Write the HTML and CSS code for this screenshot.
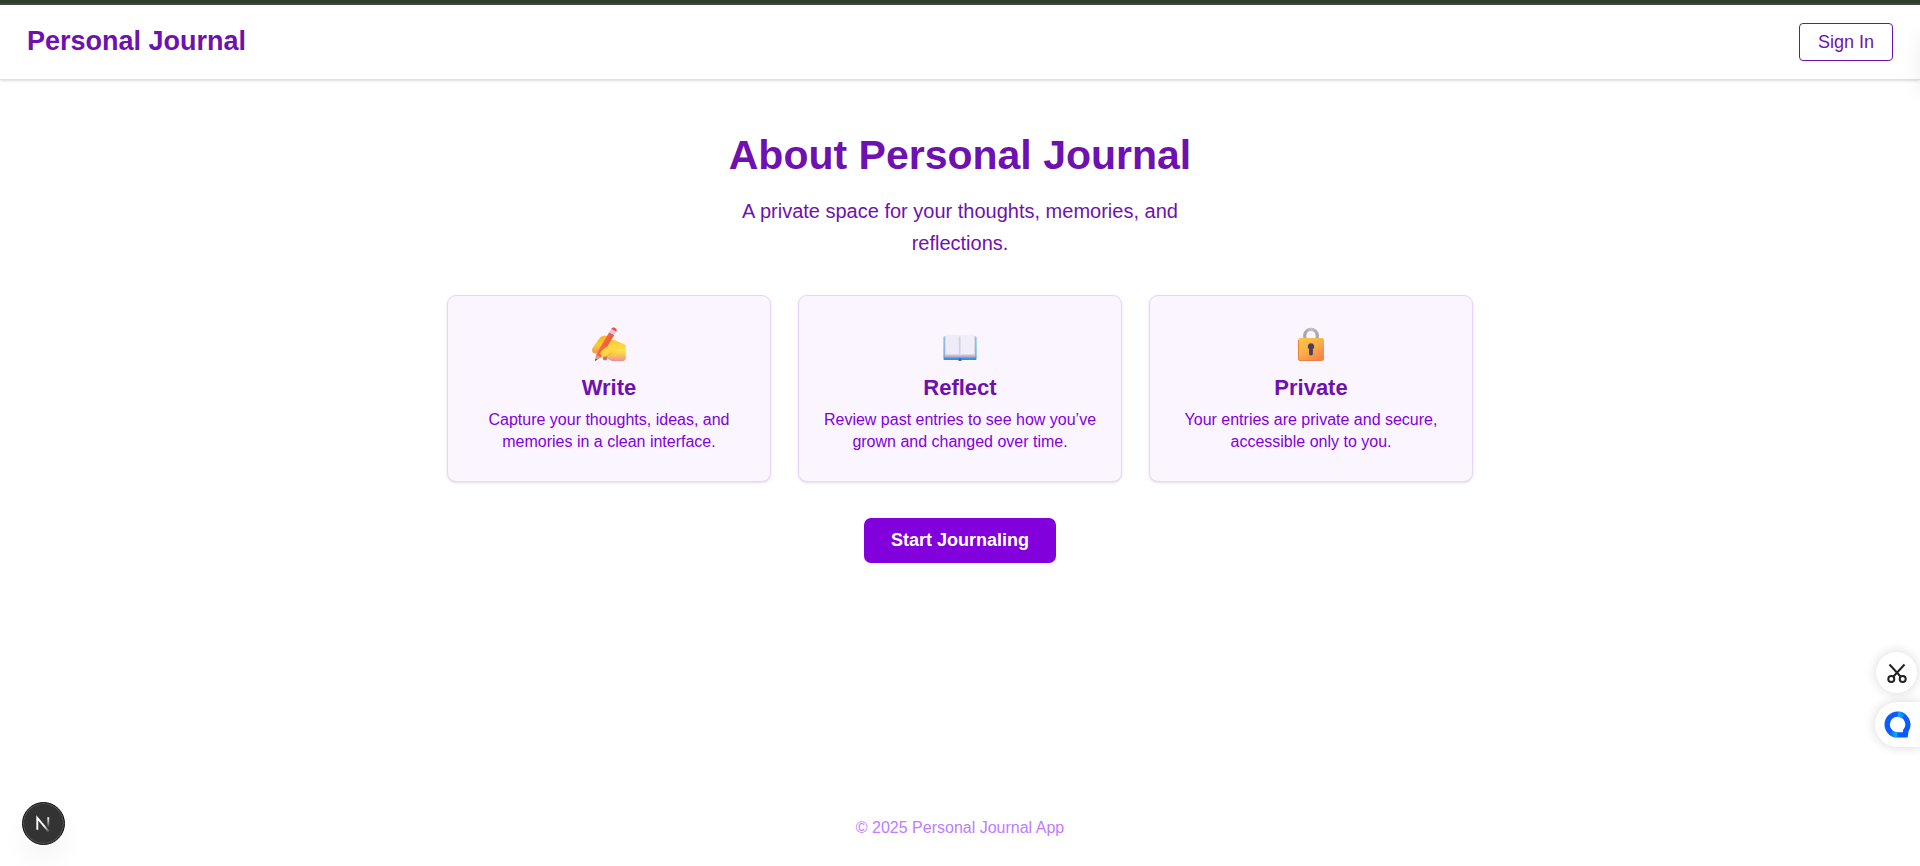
FILE: index.html
```html
<!DOCTYPE html>
<html lang="en">
<head>
<meta charset="utf-8">
<meta name="viewport" content="width=device-width, initial-scale=1">
<title>Personal Journal</title>
<link rel="stylesheet" href="styles.css">
</head>
<body>
<div class="top-strip"></div>
<header class="site-header">
  <div class="brand">Personal Journal</div>
  <button class="sign-in" type="button">Sign In</button>
</header>
<main class="main">
  <h1 class="title">About Personal Journal</h1>
  <p class="lead">A private space for your thoughts, memories, and reflections.</p>
  <section class="cards">
    <article class="card">
      <svg class="card-icon" viewBox="0 0 36 36" aria-hidden="true">
        <defs>
          <linearGradient id="hand" x1="0" y1="0" x2="0" y2="1"><stop offset="0" stop-color="#f6b62c"/><stop offset=".5" stop-color="#fcc934"/><stop offset="1" stop-color="#e99a55"/></linearGradient>
          <linearGradient id="fist" x1="0" y1="0" x2="0" y2="1"><stop offset="0" stop-color="#fcc72f"/><stop offset=".5" stop-color="#ffe04c"/><stop offset=".75" stop-color="#f7c152"/><stop offset="1" stop-color="#e48db0"/></linearGradient>
          <linearGradient id="pencil" x1="0" y1="0" x2="1" y2=".6"><stop offset="0" stop-color="#ff7a4a"/><stop offset=".6" stop-color="#f95f3a"/><stop offset="1" stop-color="#e44c30"/></linearGradient>
        </defs>
        <path d="M17 10.300c-3-.8-6.500-.6-8.300 1.700L1.800 21.500C.4 24 .9 26.500 3 27.300c1.800.7 3.500-.3 5-2z" fill="url(#hand)"/>
        <path d="M20 14.500c1.500-1.200 3-1 4.500 0l9 4c.9.400 1.300 1 1.300 2V32c0 2-1.300 3.200-3.300 3.200H23c-3 0-5.500-1.700-7.500-3.700L9.500 29z" fill="url(#fist)"/>
        <circle cx="14" cy="32" r="2.400" fill="#d56f60"/>
        <path d="M18.200 6.300l5 2.800L10 31l-4.800 2.700L5 28.500z" fill="url(#pencil)"/>
        <path d="M5 28.500l4.800 2.700L4.200 35z" fill="#e09a7c"/>
        <path d="M4.500 32.500l2 1.100L4.200 35z" fill="#70414c"/>
        <path d="M18.200 6.300l2.100-3.300 5 2.800-2.100 3.300z" fill="#d8c8e6"/>
        <path d="M20.300 3c.9-1.500 2.300-1.900 3.800-1.100 1.600.8 2.100 2.300 1.200 3.900z" fill="#fb4845"/>
        <path d="M24.500 18l-8 2.500c-2.200.9-4.300 2.700-6 4.500-1.800 2-1 4.700 1.200 5.500 2 .7 3.800-.3 5.300-1.700l5-2.300 5-4z" fill="#fed640"/>
        <path d="M12 30.600c2 .7 3.800-.3 5.300-1.700l4.200-2" fill="none" stroke="#eaac35" stroke-width=".8"/>
      </svg>
      <h2 class="card-title">Write</h2>
      <p class="card-text">Capture your thoughts, ideas, and memories in a clean interface.</p>
    </article>
    <article class="card">
      <svg class="card-icon" viewBox="0 0 36 36" aria-hidden="true">
        <defs>
          <linearGradient id="cover" x1="0" y1="0" x2="0" y2="1"><stop offset="0" stop-color="#59c6ef"/><stop offset=".85" stop-color="#3da0e6"/><stop offset="1" stop-color="#4a78cc"/></linearGradient>
          <linearGradient id="edge" x1="0" y1="0" x2="0" y2="1"><stop offset=".85" stop-color="#c9c2da"/><stop offset="1" stop-color="#a394b4"/></linearGradient>
        </defs>
        <path d="M2.500 10.500h31c.6 0 1 .4 1 1V33c0 .6-.4 1-1 1H20c-.4 1.200-3.600 1.200-4 0H2.500c-.6 0-1-.4-1-1V11.500c0-.6.400-1 1-1z" fill="url(#cover)"/>
        <path d="M2.500 10h31v20.500c0 .6-.3 1-1 1H20.500L18 32.500l-2.500-1h-12c-.7 0-1-.4-1-1z" fill="url(#edge)"/>
        <path d="M3.500 10.300c0-.9.600-1.500 1.500-1.500h10.500c1.500 0 2.500.6 2.500 1.500v19.200c-.5-.6-1.500-.9-2.500-.9h-12z" fill="#efecf7"/>
        <path d="M32.500 10.300c0-.9-.6-1.500-1.500-1.500H20.500c-1.500 0-2.500.6-2.500 1.500v19.200c.5-.6 1.500-.9 2.500-.9h12z" fill="#f1eef8"/>
        <path d="M17.700 10.500v18.500" stroke="#d6d0e6" stroke-width="1.800"/>
        <path d="M16.500 31.800h3l-.4 3h-2.200z" fill="#4868b5"/>
      </svg>
      <h2 class="card-title">Reflect</h2>
      <p class="card-text">Review past entries to see how you’ve grown and changed over time.</p>
    </article>
    <article class="card">
      <svg class="card-icon" viewBox="0 0 36 36" aria-hidden="true">
        <defs>
          <linearGradient id="lock" x1="0" y1="0" x2=".7" y2="1"><stop offset="0" stop-color="#fcc944"/><stop offset=".5" stop-color="#fbb149"/><stop offset="1" stop-color="#f5824c"/></linearGradient>
          <linearGradient id="shackle" x1="0" y1="0" x2="1" y2="0"><stop offset="0" stop-color="#a7a4ac"/><stop offset=".5" stop-color="#c5c0ca"/><stop offset="1" stop-color="#aaa3b1"/></linearGradient>
        </defs>
        <path d="M11.800 13V9.500a6.200 6.200 0 0 1 12.400 0V13" fill="none" stroke="url(#shackle)" stroke-width="3.200"/>
        <rect x="5" y="12" width="26" height="23" rx="2.500" fill="url(#lock)"/>
        <path d="M5.500 14v18.500c0 1.200.8 2 2 2h21" fill="none" stroke="#e88242" stroke-width="1"/>
        <path d="M18 17.200a3.200 3.200 0 0 1 1.900 5.800v4.500a1.900 1.900 0 0 1-3.800 0V23a3.200 3.200 0 0 1 1.900-5.800z" fill="#4b3d61"/>
      </svg>
      <h2 class="card-title">Private</h2>
      <p class="card-text">Your entries are private and secure, accessible only to you.</p>
    </article>
  </section>
  <button class="start" type="button">Start Journaling</button>
</main>
<footer class="site-footer">© 2025 Personal Journal App</footer>

<button class="dev-badge" type="button" aria-label="Open developer tools">
  <svg class="dev-icon" viewBox="0 0 43 43" aria-hidden="true">
    <defs>
      <linearGradient id="diag" gradientUnits="userSpaceOnUse" x1="22" y1="24" x2="28" y2="31"><stop stop-color="#fff"/><stop offset="1" stop-color="#fff" stop-opacity="0"/></linearGradient>
      <linearGradient id="stem" gradientUnits="userSpaceOnUse" x1="26" y1="15" x2="26" y2="26"><stop stop-color="#fff"/><stop offset="1" stop-color="#fff" stop-opacity="0"/></linearGradient>
    </defs>
    <path d="M15 28V15.500l12 14.500" fill="none" stroke="url(#diag)" stroke-width="2"/>
    <path d="M26.500 15v11" stroke="url(#stem)" stroke-width="2"/>
  </svg>
</button>
<div class="edge-panel"></div>
<div class="side-tools">
  <button class="tool-cut" type="button" aria-label="Capture">
    <svg class="tool-icon" viewBox="0 0 24 24" fill="none" stroke="#222" stroke-width="2" aria-hidden="true">
      <path d="M4.500 3.500l11.500 12.500M19.500 3.500L8 16"/><circle cx="6.300" cy="18" r="3"/><circle cx="17.700" cy="18" r="3"/>
    </svg>
  </button>
  <button class="tool-chat" type="button" aria-label="Assistant">
    <svg class="chat-icon" viewBox="0 0 28 28" aria-hidden="true">
      <defs><linearGradient id="ring" x1="0" y1="0" x2="1" y2="0"><stop offset="0" stop-color="#12b5f5"/><stop offset="1" stop-color="#0a5cff"/></linearGradient><linearGradient id="ring-low" x1="0" y1="0" x2="1" y2="0"><stop offset="0" stop-color="#0a5cff"/><stop offset="1" stop-color="#12b5f5"/></linearGradient></defs>
      <path d="M14 .5a13.500 13.500 0 0 1 11.500 20.500L24.500 27.500H14a13.500 13.500 0 0 1 0-27zM14 6a8 8 0 1 0 0 16h5.500l.5-2.700A8 8 0 0 0 14 6z" fill="#0a5cff" fill-rule="evenodd"/>
      <path d="M15 .6c3.500 0 6 1.600 8 3.700l-4.500 3.200c-1.500-1-2.500-1.400-4.500-1.500z" fill="url(#ring)"/>
      <path d="M5 24c2.500 2.300 5 3.500 8 3.500l1-5.600c-1.700-.1-4-.8-5.200-1.800z" fill="url(#ring-low)"/>
    </svg>
  </button>
</div>
</body>
</html>
```
FILE: styles.css
```css
* {
  box-sizing: border-box;
}

body {
  margin: 0;
  min-height: 100vh;
  display: flex;
  flex-direction: column;
  overflow-x: hidden;
  background: #fff;
  color: #6e11b0;
  font-family: "Liberation Sans", Arial, sans-serif;
  font-size: 18px;
}

button {
  font: inherit;
  cursor: pointer;
}

h1,
h2,
p {
  margin: 0;
}

.top-strip {
  height: 5px;
  background: #313d2f;
  border-bottom: 2px solid #414941;
}

.site-header {
  display: flex;
  justify-content: space-between;
  align-items: flex-start;
  padding: 18px 27px;
  border-bottom: 1px solid #e9d4ff;
  box-shadow: 0 1px 3px rgba(0, 0, 0, 0.1), 0 1px 2px -1px rgba(0, 0, 0, 0.1);
}

.brand {
  font-size: 27px;
  font-weight: 700;
  line-height: 36px;
}

.sign-in {
  padding: 4px 18px;
  border: 1px solid #6e11b0;
  border-radius: 4px;
  background: transparent;
  color: #6e11b0;
  line-height: 28px;
}

.main {
  flex: 1;
  display: flex;
  flex-direction: column;
  align-items: center;
  padding: 53px 27px 0;
}

.title {
  margin-bottom: 18px;
  font-size: 41px;
  line-height: 44px;
  text-align: center;
}

.lead {
  max-width: 504px;
  margin-bottom: 36px;
  font-size: 20px;
  line-height: 32px;
  text-align: center;
}

.cards {
  display: grid;
  grid-template-columns: repeat(3, 1fr);
  gap: 27px;
  width: 100%;
  max-width: 1026px;
  margin-bottom: 36px;
}

.card {
  display: flex;
  flex-direction: column;
  align-items: center;
  padding: 28px 24px;
  border: 1px solid #e9d4ff;
  border-radius: 9px;
  background: #faf5ff;
  box-shadow: 0 1px 3px rgba(0, 0, 0, 0.1), 0 1px 2px -1px rgba(0, 0, 0, 0.1);
  text-align: center;
}

.card-icon {
  width: 36px;
  height: 36px;
  margin: 2px 0 10px;
}

.card-title {
  margin-bottom: 5px;
  font-size: 22px;
  line-height: 32px;
}

.card-text {
  color: #8200db;
  font-size: 16px;
  line-height: 22px;
}

.start {
  padding: 9px 27px;
  border: 0;
  border-radius: 7px;
  background: #8200db;
  color: #fff;
  font-weight: 700;
  line-height: 27px;
}

.site-footer {
  padding: 27px;
  color: #c27aff;
  font-size: 16px;
  line-height: 22px;
  text-align: center;
}

.dev-badge {
  position: fixed;
  left: 22px;
  bottom: 21px;
  width: 43px;
  height: 43px;
  padding: 0;
  border: 1px solid #111;
  border-radius: 50%;
  background: #333;
  box-shadow: inset 0 0 0 1px #555, 0 16px 32px -8px rgba(0, 0, 0, 0.1);
}

.dev-icon {
  display: block;
  width: 100%;
}

.edge-panel {
  position: fixed;
  top: 38px;
  right: -24px;
  width: 20px;
  height: 54px;
  box-shadow: 0 0 26px rgba(0, 0, 0, 0.1);
}

.side-tools {
  position: fixed;
  right: 0;
  bottom: 119px;
  display: flex;
  flex-direction: column;
  align-items: flex-end;
  gap: 9px;
}

.tool-cut,
.tool-chat {
  display: flex;
  align-items: center;
  justify-content: center;
  padding: 0;
  border: 0;
  background: #fff;
  box-shadow: 0 0 12px rgba(0, 0, 0, 0.16);
}

.tool-cut {
  width: 41px;
  height: 41px;
  margin-right: 3px;
  border-radius: 50%;
}

.tool-chat {
  width: 45px;
  height: 45px;
  border-radius: 23px 0 0 23px;
}

.tool-icon {
  width: 24px;
  height: 24px;
}

.chat-icon {
  width: 27px;
  height: 27px;
}
```
